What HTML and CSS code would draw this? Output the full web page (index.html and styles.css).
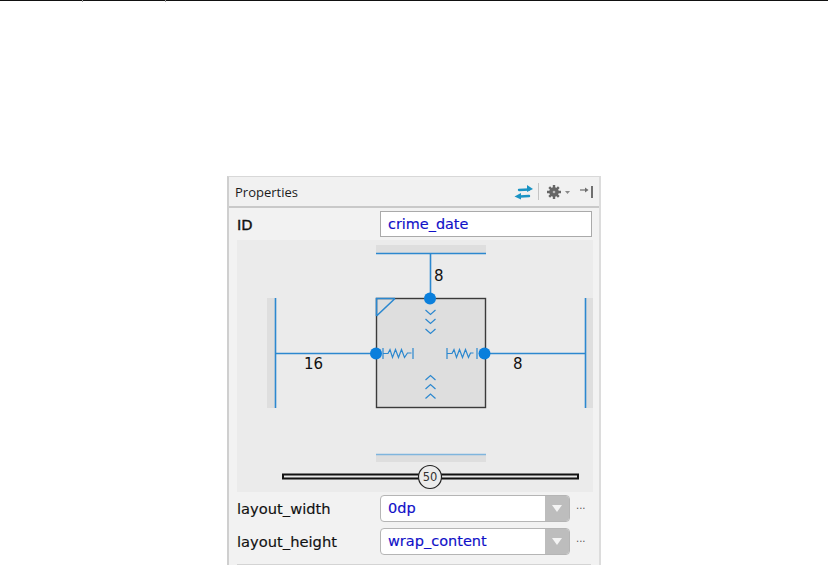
FILE: index.html
```html
<!DOCTYPE html>
<html lang="en">
<head>
<meta charset="utf-8">
<title>Properties</title>
<link rel="stylesheet" href="styles.css">
</head>
<body>
<div class="topline"><i class="tick"></i><i class="tick"></i></div>
<main class="panel">
  <header class="head">
    <span class="title">Properties</span>
    <div class="tools">
      <svg class="ic-swap" width="20" height="16" viewBox="0 0 20 16"><path d="M5 6L15 5.500" stroke="#1a93c4" stroke-width="2.400" stroke-linecap="round"/><path d="M13 1L19 5 13 8z" fill="#1a93c4"/><path d="M6 12.500L15 12" stroke="#1a93c4" stroke-width="2.400" stroke-linecap="round"/><path d="M7 9L0.500 12.500 7 15.500z" fill="#1a93c4"/></svg>
      <i class="sep"></i>
      <svg class="ic-gear" width="24" height="14" viewBox="0 0 24 14"><g stroke="#666" stroke-width="2.400"><path d="M7 0v14M0 7h14M2.200 2.200l9.600 9.600M11.800 2.200l-9.600 9.600"/></g><circle cx="7" cy="7" r="4.800" fill="#666"/><circle cx="7" cy="7" r="1.300" fill="#bbb"/><path d="M18 6h5l-2.500 3z" fill="#8a8a8a"/></svg>
      <svg class="ic-hide" width="15" height="14" viewBox="0 0 15 14"><path d="M1 5h6" stroke="#6f6f6f" stroke-width="1.200"/><path d="M6 2.500L9.500 5 6 7.500z" fill="#6f6f6f"/><path d="M13 1v12" stroke="#6f6f6f" stroke-width="2"/></svg>
    </div>
  </header>
  <div class="idrow">
    <label class="label id">ID</label>
    <div class="field">crime_date</div>
  </div>
  <div class="blueprint">
    <svg class="diagram" width="356" height="252" viewBox="237 240 356 252">
      <g fill="#dedede">
        <rect x="376" y="245" width="110" height="8"/>
        <rect x="267" y="298" width="8" height="110"/>
        <rect x="585" y="298" width="8" height="110"/>
        <rect x="376" y="454" width="110" height="8"/>
        <rect x="376.500" y="298.500" width="109" height="109" stroke="#3a3a3a" stroke-width="1.400"/>
      </g>
      <g class="bl">
        <path d="M376 253.500H486M430.500 253V298M275.500 298V408M585.500 298V408M275 353.500H376M486 353.500H585"/>
        <path class="pale" d="M376 454.500H486"/>
        <path d="M376.500 316V298.500H395M376.500 316L395 298.500"/>
        <path class="fine" d="M425.500 310l5 4.500 5-4.500M425.500 319l5 4.500 5-4.500M425.500 329l5 4.500 5-4.500"/>
        <path class="fine" d="M425.500 380l5-4.500 5 4.500M425.500 389l5-4.500 5 4.500M425.500 398.500l5-4.500 5 4.500"/>
        <path class="fine" d="M383 348v11M383 353.500h5l2-4 2.500 8 3-8 3 8 3-8 3 8 3-4.500h4M413 348v11"/>
        <path class="fine" d="M447 348v11M447 353.500h5l2-4 2.500 8 3-8 3 8 3-8 3 8 2-4.500h3M477 348v11"/>
      </g>
      <g fill="#0a7fdc">
        <circle cx="430" cy="298.500" r="6"/>
        <circle cx="376" cy="353.500" r="6"/>
        <circle cx="484.500" cy="353.500" r="6"/>
      </g>
      <g class="num">
        <text x="434" y="281">8</text>
        <text x="304" y="369">16</text>
        <text x="513" y="369">8</text>
      </g>
      <rect x="283" y="474.500" width="295" height="4" fill="#e8e8e8" stroke="#111" stroke-width="2"/>
      <circle cx="430" cy="477" r="11.500" fill="#ececec" stroke="#222" stroke-width="1.200"/>
      <text class="knob" x="430" y="481" text-anchor="middle">50</text>
    </svg>
  </div>
  <div class="proprow">
    <label class="label">layout_width</label>
    <div class="combo"><span class="val">0dp</span><span class="arrow"><i></i></span></div>
    <span class="more">...</span>
  </div>
  <div class="proprow">
    <label class="label">layout_height</label>
    <div class="combo"><span class="val">wrap_content</span><span class="arrow"><i></i></span></div>
    <span class="more">...</span>
  </div>
  <div class="rule"></div>
</main>
</body>
</html>
```
FILE: styles.css
```css
html, body { margin: 0; padding: 0; background: #fff; height: 100%; overflow: hidden; }
body { font-family: "DejaVu Sans", sans-serif; color: #111; }
.topline { height: 1px; background: #111; display: flex; gap: 82px; padding-left: 82px; margin-bottom: 175px; }
.tick { width: 1px; height: 2px; background: #999; }
.panel {
  margin-left: 227px; width: 374px; height: 389px; box-sizing: border-box;
  background: #f2f2f2; border-left: 2px solid #cfcfcf; border-right: 2px solid #dcdcdc; border-top: 1px solid #d8d8d8;
  display: flex; flex-direction: column; overflow: hidden;
}
.head {
  height: 29px; flex: none; display: flex; align-items: center; justify-content: space-between;
  padding: 0 5px 0 6px; background: #f1f1f1; border-bottom: 2px solid #c9c9c9;
}
.title { font-family: "Open Sans", sans-serif; font-size: 13px; color: #1c1c1c; }
.tools { display: flex; align-items: center; }
.ic-swap { margin-right: 4px; }
.sep { width: 1px; height: 17px; background: #c4c4c4; margin-right: 8px; }
.ic-gear { margin-right: 8px; }
.idrow { height: 32px; flex: none; display: flex; align-items: center; justify-content: space-between; padding: 0 7px 0 8px; }
.label { font-size: 14.700px; color: #111; -webkit-text-stroke: 0.15px #111; }
.label.id { -webkit-text-stroke: 0.4px #111; }
.field {
  width: 212px; height: 26px; box-sizing: border-box; background: #fff; border: 1px solid #aaa;
  padding-left: 7px; line-height: 24px; font-size: 14.400px; color: #1010c8; -webkit-text-stroke: 0.15px #1010c8;
}
.blueprint { height: 252px; flex: none; margin: 0 6px 0 8px; background: #ebebeb; }
.diagram { display: block; }
.bl path { fill: none; stroke: #2c88cf; stroke-width: 1.600; }
.bl path.fine { stroke-width: 1.200; }
.bl path.pale { stroke: #7fb5dd; stroke-width: 1.500; }
.num text { font-family: "DejaVu Sans", sans-serif; font-size: 15px; fill: #111; }
.knob { font-family: "DejaVu Sans", sans-serif; font-size: 11.500px; fill: #333; }
.proprow { height: 33px; flex: none; display: flex; align-items: center; padding: 0 0 0 8px; }
.proprow .label { width: 143px; flex: none; }
.combo {
  width: 190px; height: 27px; box-sizing: border-box; display: flex; background: #fff;
  border: 1px solid #b5b5b5; border-radius: 4px; overflow: hidden;
}
.val { flex: 1; padding-left: 7px; line-height: 25px; font-size: 14.500px; color: #1010c8; -webkit-text-stroke: 0.15px #1010c8; }
.arrow { width: 24px; background: #bdbdbd; display: flex; align-items: center; justify-content: center; }
.arrow i { border-left: 5px solid transparent; border-right: 5px solid transparent; border-top: 7px solid #f4f4f4; }
.more { margin-left: 6px; font-size: 10px; color: #555; position: relative; top: -3px; }
.rule { height: 1px; margin: 6px 8px 0; background: #d4d4d4; flex: none; }
```
